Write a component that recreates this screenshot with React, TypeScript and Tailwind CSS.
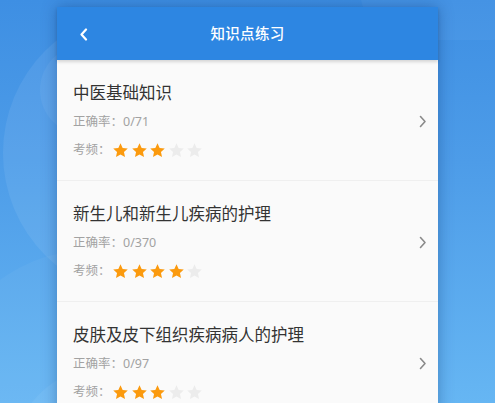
import React from "react";

const items = [
  { title: "中医基础知识", rate: "0/71", stars: 3 },
  { title: "新生儿和新生儿疾病的护理", rate: "0/370", stars: 4 },
  { title: "皮肤及皮下组织疾病病人的护理", rate: "0/97", stars: 3 },
];

function Star({ on }: { on: boolean }) {
  return (
    <svg width="17" height="17" viewBox="0 0 24 24">
      <path
        d="M12 1.8l3.05 6.6 7.2.8-5.35 4.9 1.5 7.1L12 17.6l-6.4 3.6 1.5-7.1L1.75 9.2l7.2-.8z"
        fill={on ? "#fb9a0e" : "#ececec"}
      />
    </svg>
  );
}

export default function App() {
  return (
    <div
      className="relative w-[495px] h-[403px] overflow-hidden bg-[linear-gradient(180deg,#3e8fe3_0%,#4d9ce8_40%,#66b6f3_100%)]"
      style={{ fontFamily: '"Noto Sans", "Noto Sans CJK SC", sans-serif' }}
    >
      <div className="absolute left-[3px] top-[8px] w-[300px] h-[290px] rounded-full bg-white/[0.07]" />
      <div className="absolute left-[40px] top-[45px] w-[110px] h-[90px] rounded-full bg-white/[0.05]" />
      <div className="absolute left-[-60px] top-[250px] w-[300px] h-[300px] rounded-full bg-white/[0.04]" />
      <div className="absolute left-[10px] top-[365px] w-[200px] h-[200px] rounded-full bg-white/[0.05]" />
      <div className="absolute left-[360px] top-[-60px] w-[180px] h-[100px] rounded-full bg-white/[0.04]" />

      <div className="relative ml-[57px] mt-[7px] w-[381px] shadow-[0_0_14px_rgba(0,40,100,0.35)]">
        <div className="relative flex items-center justify-center h-[53px] bg-[#2d86e2] shadow-[0_2px_3px_rgba(0,0,0,0.15)]">
          <svg
            className="absolute left-[21px] top-[21px]"
            width="12"
            height="13"
            viewBox="0 0 12 13"
          >
            <path d="M8 1.5L3.5 6.5 8 11.5" stroke="#fff" strokeWidth="2.2" fill="none" strokeLinecap="round" strokeLinejoin="round" />
          </svg>
          <span className="text-white text-[14.5px] font-medium tracking-[0.3px]">知识点练习</span>
        </div>
        <div className="bg-[#fafafa]">
          {items.map((it, i) => (
            <div
              key={i}
              className="flex items-center border-b border-[#efefef] pl-4 pr-[11px] pt-[22px] pb-5"
            >
              <div className="flex-1 flex flex-col">
                <div className="h-[22px] leading-[22px] text-[16.5px] text-[#333] whitespace-nowrap">{it.title}</div>
                <div className="mt-2 h-5 leading-5 text-[12.5px] text-[#a2a2a2] whitespace-nowrap">正确率：{it.rate}</div>
                <div className="mt-2 h-5 flex items-center text-[12.5px] text-[#a2a2a2]">
                  <span className="w-[39px] shrink-0 whitespace-nowrap">考频：</span>
                  <div className="flex gap-[1.5px]">
                    {[0, 1, 2, 3, 4].map((s) => (
                      <Star key={s} on={s < it.stars} />
                    ))}
                  </div>
                </div>
              </div>
              <svg width="8" height="13" viewBox="0 0 8 13">
                <path d="M1.5 1.5L6 6.5 1.5 11.5" stroke="#8a8a8a" strokeWidth="1.6" fill="none" strokeLinecap="round" strokeLinejoin="round" />
              </svg>
            </div>
          ))}
        </div>
      </div>
    </div>
  );
}
